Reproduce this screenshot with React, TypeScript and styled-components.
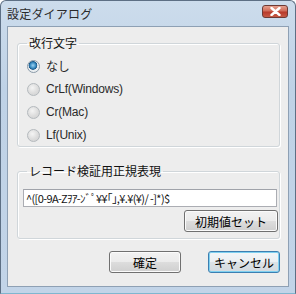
import styled, { createGlobalStyle } from "styled-components";

const GlobalStyle = createGlobalStyle`
    html, body {
        margin: 0;
        padding: 0;
        background: #ffffff;
    }

    body {
        font-family: "Noto Sans CJK JP", "Liberation Sans", sans-serif;
        font-size: 12px;
        color: #000;
    }
`;

const options = ["なし", "CrLf(Windows)", "Cr(Mac)", "Lf(Unix)"];
const pattern = "^([0-9A-Zｦｱ-ﾝﾞﾟ¥¥｢｣,¥.¥(¥)/ -]*)$";

export default function App(): JSX.Element {
    return (
        <>
            <GlobalStyle />
            <Window>
                <TitleBar>
                    <Title>設定ダイアログ</Title>
                    <CloseButton aria-label="閉じる">
                        <svg width="11" height="9" viewBox="0 0 11 9">
                            <path d="M1.5 1 L9.5 8 M9.5 1 L1.5 8" stroke="#ffffff" strokeWidth="2.4" strokeLinecap="round" />
                        </svg>
                    </CloseButton>
                </TitleBar>

                <Client>
                    <Group>
                        <Legend>改行文字</Legend>
                        <RadioList>
                            {options.map((label, i) => (
                                <RadioRow key={label}>
                                    <RadioDot $checked={i === 0} />
                                    <span>{label}</span>
                                </RadioRow>
                            ))}
                        </RadioList>
                    </Group>

                    <Group $gap={17}>
                        <Legend>レコード検証用正規表現</Legend>
                        <PatternBox>
                            <TextBox>{pattern}</TextBox>
                            <Button $width={94}>初期値セット</Button>
                        </PatternBox>
                    </Group>

                    <Footer>
                        <Button $width={72}>確定</Button>
                        <Button $width={72} $default>キャンセル</Button>
                    </Footer>
                </Client>
            </Window>
        </>
    )
};

const Window = styled.div`
    width: 296px;
    height: 294px;
    box-sizing: border-box;
    display: flex;
    flex-direction: column;
    border: 1px solid #5d6f84;
    border-bottom-color: #7fb6cf;
    border-radius: 6px 6px 0 0;
    background: linear-gradient(180deg, #ccdcec 0%, #bfd2e6 30%, #c2d4e8 100%);
    padding: 0 6px 6px 6px;
`;

const TitleBar = styled.div`
    height: 25px;
    display: flex;
    align-items: flex-start;
    justify-content: space-between;
`;

const Title = styled.div`
    margin-top: 4px;
    font-size: 12px;
    color: #2a2a2a;
    letter-spacing: 0.2px;
`;

const CloseButton = styled.div`
    width: 26px;
    height: 13px;
    margin-top: 4px;
    margin-right: 1px;
    box-sizing: border-box;
    display: flex;
    align-items: center;
    justify-content: center;
    border: 1px solid #6d3a35;
    border-radius: 3px;
    background: linear-gradient(180deg, #e5a08f 0%, #d06b58 45%, #b8392a 55%, #c65a45 100%);
`;

const Client = styled.div`
    flex: 1;
    display: flex;
    flex-direction: column;
    background: #ededed;
    border: 1px solid #8ea0b4;
    padding: 9px 8px 0 9px;
`;

const Group = styled.fieldset<{ $gap?: number }>`
    margin: ${props => props.$gap ?? 0}px 0 0 0;
    padding: 0 0 0 6px;
    border: 1px solid #d0d6da;
    border-radius: 3px;
    box-shadow: inset 1px 1px 0 #ffffff, 1px 1px 0 #ffffff;
`;

const Legend = styled.legend`
    padding: 0 2px;
    margin-left: 3px;
    line-height: 14px;
    font-size: 12px;
    color: #111;
`;

const RadioList = styled.div`
    display: flex;
    flex-direction: column;
    padding-top: 4px;
`;

const RadioRow = styled.label`
    height: 23px;
    display: flex;
    align-items: center;
    gap: 4px;
    padding-left: 1px;
    font-family: "Liberation Sans", "Noto Sans CJK JP", sans-serif;
    font-size: 12px;
    color: #2a2a2a;
    letter-spacing: -0.2px;

    span {
        margin-left: 2px;
    }
`;

const RadioDot = styled.span<{ $checked: boolean }>`
    width: 13px;
    height: 13px;
    box-sizing: border-box;
    border-radius: 50%;
    border: 1px solid ${props => props.$checked ? "#8a9aa8" : "#b4b9bd"};
    background: ${props => props.$checked
        ? "radial-gradient(circle at 45% 40%, #9fd2f2 0%, #3c8fc4 30%, #1c5a8c 45%, #e8ecef 52%, #f4f6f7 100%)"
        : "radial-gradient(circle at 40% 35%, #f4f4f4 0%, #dcdcdc 55%, #cfd0d1 100%)"};
    margin-top: 1px;
`;

const PatternBox = styled.div`
    display: flex;
    flex-direction: column;
    align-items: flex-end;
    gap: 3px;
    padding: 11px 1px 6px 0;
`;

const TextBox = styled.div`
    width: 254px;
    height: 18px;
    box-sizing: border-box;
    align-self: flex-start;
    margin-left: -1px;
    padding: 0 2px;
    border: 1px solid #abadb3;
    border-top-color: #a0a3aa;
    background: #ffffff;
    font-family: "Noto Sans CJK JP", "Liberation Sans", sans-serif;
    font-size: 11px;
    line-height: 16px;
    white-space: nowrap;
    overflow: hidden;
    color: #111;
    letter-spacing: -0.6px;
`;

const Button = styled.div<{ $width: number; $default?: boolean }>`
    width: ${props => props.$width}px;
    height: 22px;
    box-sizing: border-box;
    display: flex;
    align-items: center;
    justify-content: center;
    border: 1px solid ${props => props.$default ? "#3c7fb1" : "#707070"};
    border-radius: 3px;
    background: ${props => props.$default
        ? "linear-gradient(180deg, #f3f6f8 0%, #ebeff2 50%, #dce2e6 51%, #d3dadf 100%)"
        : "linear-gradient(180deg, #f2f2f2 0%, #ebebeb 50%, #dddddd 51%, #cfcfcf 100%)"};
    box-shadow: inset 0 0 0 1px ${props => props.$default ? "#7fd0f0" : "#fbfbfb"};
    font-size: 12px;
    color: #000;
`;

const Footer = styled.div`
    display: flex;
    justify-content: flex-end;
    gap: 27px;
    padding-top: 12px;
`;
